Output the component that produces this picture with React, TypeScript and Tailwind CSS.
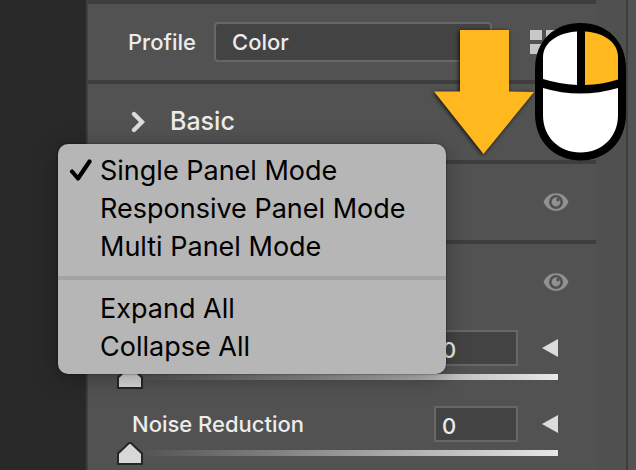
import { useState } from "react";

function EyeIcon() {
  return (
    <svg viewBox="0 0 26 18" className="block h-[18px] w-[26px]" aria-hidden="true">
      <path d="M0.500 9C3 3.500 7.500 0.200 13 0.200S23 3.500 25.500 9C23 14.500 18.500 17.800 13 17.800S3 14.500 0.500 9Z" fill="#919191" />
      <circle cx="13" cy="9" r="7" fill="#515151" />
      <circle cx="13" cy="9" r="4.400" fill="#919191" />
      <circle cx="15" cy="6.800" r="1.700" fill="#515151" />
    </svg>
  );
}

function SectionHeader({ label }: { label: string }) {
  return (
    <div className="flex h-[76px] items-center justify-end pr-[27px]">
      <button type="button" aria-label={label}>
        <EyeIcon />
      </button>
    </div>
  );
}

function SliderRow({ name, label }: { name: string; label?: string }) {
  const [value, setValue] = useState(0);

  return (
    <div className="mb-[17px] pr-[38px] pl-[29px]">
      <div className="flex h-9 items-center pl-[15px]">
        {label ? (
          <label htmlFor={name} className="text-[22px] font-medium text-[#ececec]">
            {label}
          </label>
        ) : null}
        <input
          type="text"
          aria-label={`${name} value`}
          value={value}
          onChange={(e) => setValue(Number(e.target.value) || 0)}
          className="ml-auto h-9 w-[84px] border-2 border-[#676767] bg-[#434343] px-1.5 pt-1 text-[22px] font-medium text-[#ececec]"
        />
        <button type="button" aria-label={`${name} details`} className="ml-6">
          <svg viewBox="0 0 16 18" className="block h-[18px] w-4" aria-hidden="true">
            <path d="M0 9 16 0V18Z" fill="#dcdcdc" />
          </svg>
        </button>
      </div>
      <div className="relative h-[23px] pt-2">
        <input
          id={name}
          type="range"
          aria-label={label ?? name}
          min={0}
          max={100}
          value={value}
          onChange={(e) => setValue(Number(e.target.value))}
          className="block h-1.5 w-full appearance-none bg-linear-to-r from-[#4c4c4c] to-[#e8e8e8] [&::-webkit-slider-thumb]:h-[23px] [&::-webkit-slider-thumb]:w-[26px] [&::-webkit-slider-thumb]:appearance-none [&::-webkit-slider-thumb]:bg-transparent"
        />
        <svg
          viewBox="0 0 26 23"
          className="pointer-events-none absolute top-0 h-[23px] w-[26px]"
          style={{ left: `calc((100% - 26px) * ${value / 100})` }}
          aria-hidden="true"
        >
          <path d="M1 22V11.500L11.500 1.500Q13 0.500 14.500 1.500L25 11.500V22Z" fill="#d8d8d8" stroke="#262626" strokeWidth="2" />
        </svg>
      </div>
    </div>
  );
}

function MenuItem({ label, checked = false }: { label: string; checked?: boolean }) {
  return (
    <button
      type="button"
      role="menuitemradio"
      aria-checked={checked}
      className="flex h-[38px] w-full items-center pl-[11px] text-left text-[27px]"
    >
      <span className="w-[31px] shrink-0">
        {checked ? (
          <svg viewBox="0 0 24 24" className="block size-6" aria-hidden="true">
            <path d="M3 12.500 9 19.500 20.500 2.500" fill="none" stroke="#000" strokeWidth="4.200" strokeLinecap="round" strokeLinejoin="round" />
          </svg>
        ) : null}
      </span>
      {label}
    </button>
  );
}

function PanelMenu() {
  return (
    <div
      role="menu"
      className="absolute top-36 left-[58px] w-[388px] rounded-[10px] bg-[#b6b6b6] py-2 text-black shadow-[0_4px_24px_rgba(0,0,0,0.3),0_0_2px_rgba(0,0,0,0.6)]"
    >
      <MenuItem label="Single Panel Mode" checked />
      <MenuItem label="Responsive Panel Mode" />
      <MenuItem label="Multi Panel Mode" />
      <hr className="my-2.5 h-1 border-0 bg-[#a3a3a3]" />
      <MenuItem label="Expand All" />
      <MenuItem label="Collapse All" />
    </div>
  );
}

function RightClickHint() {
  return (
    <svg
      viewBox="0 0 204 150"
      className="pointer-events-none absolute top-5 left-[428px] h-[150px] w-[204px]"
      aria-hidden="true"
    >
      <path
        d="M32 10H81V71.500L106 72 55.500 134 6 71.500H32Z"
        fill="#ffb81e"
        className="drop-shadow-[-1px_1px_2px_rgba(0,0,0,0.8)]"
      />
      <path d="M107 49C107 20 127 3 152.500 3S198 20 198 49V94C198 123 177 140.500 152.500 140.500S107 123 107 94Z" fill="#000" />
      <path d="M115 37C115 22 131 12.500 149 11.500V65Q131 64 115 59Z" fill="#fff" />
      <path d="M157 11.500C175 12.500 190 22 190 37V59.500Q174 64.500 157 65Z" fill="#ffb81e" />
      <path d="M115 68Q152 79 190 68V95C190 117 174 132.500 152.500 132.500S115 117 115 95Z" fill="#fff" />
    </svg>
  );
}

export default function App() {
  return (
    <div className="relative flex h-screen overflow-hidden bg-[#292929] font-['Inter',sans-serif]">
      <div className="w-[86px] shrink-0" />
      <main className="flex-1 divide-y-4 divide-[#3e3e3e] border-t-4 border-l-2 border-[#3e3e3e] bg-[#525252]">
        <div className="flex h-20 items-center pr-[38px] pl-10">
          <label htmlFor="profile" className="w-[86px] text-[22px] font-medium text-[#ececec]">
            Profile
          </label>
          <select
            id="profile"
            className="h-10 min-w-0 flex-1 appearance-none rounded-sm border-2 border-[#676767] bg-[#434343] pl-4 text-[22px] font-medium text-[#ececec]"
          >
            <option>Color</option>
          </select>
          <button type="button" aria-label="Browse profiles" className="ml-[38px] grid grid-cols-2 gap-1">
            <span className="h-2.5 w-3 bg-[#c8c8c8]" />
            <span className="h-2.5 w-3 bg-[#c8c8c8]" />
            <span className="h-2.5 w-3 bg-[#c8c8c8]" />
            <span className="h-2.5 w-3 bg-[#c8c8c8]" />
          </button>
        </div>

        <div className="flex h-20 items-center pl-[43px]">
          <button type="button" aria-haspopup="menu" className="flex items-center text-[25px] font-medium text-[#ececec]">
            <svg viewBox="0 0 14 22" className="mr-[25px] h-[22px] w-3.5" aria-hidden="true">
              <path d="M3 3 11 11 3 19" fill="none" stroke="#dcdcdc" strokeWidth="4.400" strokeLinecap="round" />
            </svg>
            Basic
          </button>
        </div>

        <section>
          <SectionHeader label="Toggle curve" />
        </section>

        <section>
          <SectionHeader label="Toggle detail" />
          <div className="pt-[10px]">
            <SliderRow name="sharpening" />
            <SliderRow name="noise-reduction" label="Noise Reduction" />
          </div>
        </section>
      </main>
      <div className="w-[30px] shrink-0 bg-[#505050]" />
      <div className="w-2.5 shrink-0 border-l-2 border-[#3e3e3e] bg-[#525252]" />

      <PanelMenu />
      <RightClickHint />
    </div>
  );
}
